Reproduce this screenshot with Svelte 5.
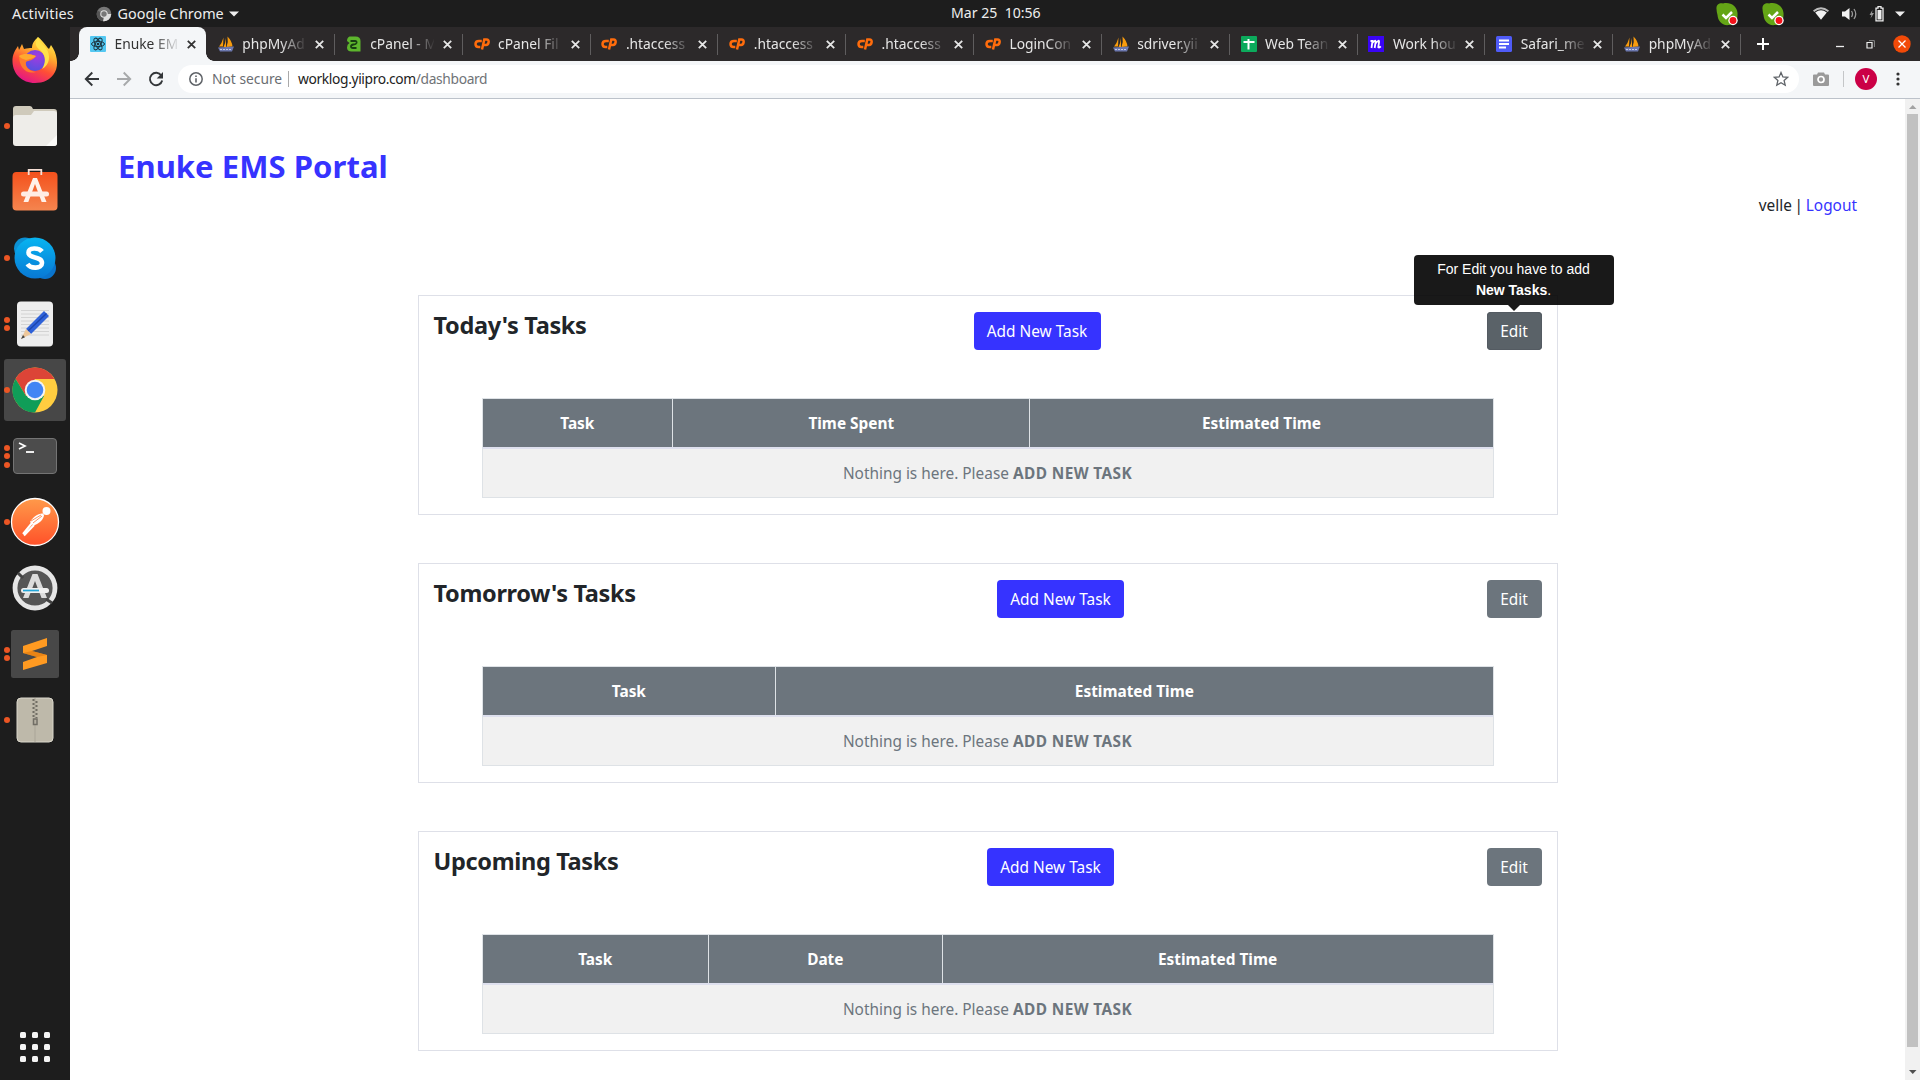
<script>
  const tabs = [
    ['react', 'Enuke EM'], ['pma', 'phpMyAd'], ['host', 'cPanel - M'],
    ['cp', 'cPanel Fil'], ['cp', '.htaccess'], ['cp', '.htaccess'],
    ['cp', '.htaccess'], ['cp', 'LoginCon'], ['pma', 'sdriver.yii'],
    ['sheet', 'Web Tean'], ['m', 'Work hou'], ['doc', 'Safari_me'], ['pma', 'phpMyAd']
  ];
  const dock = [
    ['firefox', 0], ['files', 1], ['software', 0], ['skype', 1], ['editor', 2], ['chrome', 1],
    ['terminal', 3], ['postman', 1], ['updater', 0], ['sublime', 2], ['zip', 1]
  ];
  const sections = [
    { title: "Today's Tasks", width: 154, tip: true, cols: [['Task', 190], ['Time Spent', 357], ['Estimated Time', 463]] },
    { title: "Tomorrow's Tasks", width: 201, tip: false, cols: [['Task', 293], ['Estimated Time', 717]] },
    { title: 'Upcoming Tasks', width: 181, tip: false, cols: [['Task', 226], ['Date', 233], ['Estimated Time', 551]] }
  ];
</script>

<div class="desktop">
  <header class="topbar">
    <span class="act">Activities</span>
    <svg class="appicon" width="16" height="16" viewBox="0 0 16 16"><circle cx="8" cy="8" r="7.3" fill="#777" /><path d="M8 8H15.2A7.3 7.3 0 0 1 7 15.2z" fill="#ddd" /><path d="M8 8L1.5 4.5A7.3 7.3 0 0 0 7 15.2z" fill="#555" /><circle cx="8" cy="8" r="3.8" fill="#ddd" /><circle cx="8" cy="8" r="2.7" fill="#777" /></svg>
    <span class="appname">Google Chrome</span>
    <svg class="caret" width="10" height="6" viewBox="0 0 10 6"><path d="M0 .5h10L5 5.5z" fill="#eee" /></svg>
    <span class="clock">Mar 25&nbsp; 10:56</span>
    <div class="tray">
      {#each [0, 1] as n (n)}
        <svg class="sk" width="24" height="24" viewBox="0 0 24 24"><path d="M1.5 7C1 3 4 .8 8 1.500C15-.5 22 4 22.500 11C23 18 20 23 14 23C7 24 3 19 2.500 13C2 11 1.500 9 1.500 7z" fill="#64a516" /><path d="M7.500 12.500l3.500 3.500 6-6" fill="none" stroke="#fff" stroke-width="2.500" /><circle cx="18" cy="18.500" r="4.700" fill="#fff" /><circle cx="18" cy="18.500" r="3.400" fill="#f4131b" /></svg>
      {/each}
      <svg class="wifi" width="16" height="13" viewBox="0 0 16 13"><path d="M0 3.500Q8-3 16 3.500L14.800 5Q8-.5 1.200 5z" fill="#bbb" /><path d="M2.200 5.600Q8 1 13.800 5.600L8 12.700z" fill="#f2f2f2" /></svg>
      <svg class="vol" width="16" height="14" viewBox="0 0 16 14"><path d="M0 4.500h3L7.500 1v12L3 9.500H0z" fill="#f2f2f2" /><path d="M9.500 4q2 3 0 6M12 2q3.500 5 0 10" fill="none" stroke="#999" stroke-width="1.300" /></svg>
      <svg class="bat" width="15" height="16" viewBox="0 0 15 16"><path d="M3.500 4L.5 9h2l-1 3.500L5 7H3z" fill="#999" /><path d="M7 2.200h2V.7h3v1.500h2v12.600H7z" fill="none" stroke="#eee" stroke-width="1.300" /><path d="M8.500 4h4v9.500h-4z" fill="#eee" /></svg>
      <svg class="caret2" width="10" height="6" viewBox="0 0 10 6"><path d="M0 .5h10L5 5.500z" fill="#eee" /></svg>
    </div>
  </header>

  <div class="below">
    <nav class="dock">
      {#each dock as [name, dots] (name)}
        <div class="app">
          <div class="dots">{#each Array(dots) as _, i (i)}<i></i>{/each}</div>
          <div class="tile" class:lit={name === 'chrome'}>
            <svg width="50" height="50" viewBox="0 0 50 50">
              {#if name === 'firefox'}
                <defs>
                  <linearGradient id="ff" x1=".8" y1="0" x2=".35" y2="1"><stop offset="0" stop-color="#fff44f" /><stop offset=".35" stop-color="#ffb02e" /><stop offset=".65" stop-color="#ff4f35" /><stop offset="1" stop-color="#e31587" /></linearGradient>
                  <radialGradient id="fp" cx=".6" cy=".3" r=".75"><stop offset="0" stop-color="#a33be0" /><stop offset="1" stop-color="#5351e0" /></radialGradient>
                </defs>
                <path d="M28 2C31 4 33 7 35.500 10C37 12 38 13 39 14L41 10C47 18 49 30 45 37C41 45 33 48 25 48C12 48 3 39 2.500 27C2 19 6 14 8 11L9 15L12 9L14 14C17 13 20 13 22 13C22 8 25 5 28 2z" fill="url(#ff)" />
                <circle cx="25" cy="25.500" r="10.500" fill="url(#fp)" /><path d="M9 21C14 18 20 19 26 21C23 26 19 25 16 27C15 32 19 36 26 37C15 40 9 31 9 21z" fill="#ff7b2d" /><path d="M9 21C14 18 20 19 26 21C23 24 19 24 16 25C13 24 10 23 9 21z" fill="#ffa92f" /><path d="M28 2C24 9 26 12 31 16C36 21 36 28 32 34C40 30 41 20 36 13C32 8 29 7 28 2z" fill="#ffe14a" />
              {:else if name === 'files'}
                <path d="M3 8q0-3 3-3h14q2 0 3 3h21q3 0 3 3v10H3z" fill="#cfcabb" /><path d="M3 17q0-3 3-3h15l3-4h20q3 0 3 3v29q0 3-3 3H6q-3 0-3-3z" fill="#eeede9" /><path d="M47 34v8q0 3-3 3h-8z" fill="#fafaf8" />
              {:else if name === 'software'}
                <defs><linearGradient id="so" x1="0" y1="0" x2="0" y2="1"><stop offset="0" stop-color="#f4511c" /><stop offset="1" stop-color="#f4854f" /></linearGradient></defs>
                <rect x="2.500" y="5" width="45" height="38.500" rx="4" fill="url(#so)" /><path d="M18.700 8V2.800h12.600V8" fill="none" stroke="#f6dfd5" stroke-width="1.800" /><path d="M23 11h4l9.500 24h-4.800L25 17l-6.700 18h-4.800z" fill="#fff1e9" /><rect x="11" y="24.500" width="28" height="5" rx="2.500" fill="#ffece4" />
              {:else if name === 'skype'}
                <defs><linearGradient id="sy" x1="0" y1="0" x2="0" y2="1"><stop offset="0" stop-color="#08b5f1" /><stop offset="1" stop-color="#0878d4" /></linearGradient></defs>
                <circle cx="15" cy="15.500" r="11" fill="#0c91d4" /><circle cx="35" cy="35" r="11" fill="#0a74cc" /><circle cx="25" cy="25" r="20.500" fill="url(#sy)" /><path d="M32 18.500C29 14.500 18.500 14 18.500 19.500C18.500 26 32 23 32 30C32 36 20.500 36 17.500 31" fill="none" stroke="#fff" stroke-width="4.600" />
              {:else if name === 'editor'}
                <rect x="7" y="2.500" width="36" height="45" rx="4" fill="#eee" /><path d="M11 11.500h28M11 15h28M11 18.500h28M11 22h28M11 25.500h28M11 29h28M11 32.500h28M11 36h28" stroke="#ccc" stroke-width=".8" /><path d="M16 30L34 12l5 5-18 18z" fill="#2f62d9" /><path d="M18 32L36.500 14.500" stroke="#1c46ad" stroke-width="1.500" /><path d="M16 30l5 5-10 5z" fill="#eec79a" /><path d="M13 36l2 2.200-4 1.800z" fill="#444" />
              {:else if name === 'chrome'}
                <circle cx="25" cy="25" r="22.500" fill="#ffcd40" /><path d="M5.500 13.750A22.500 22.500 0 0 1 44.500 14H25L16 31z" fill="#dc4437" /><path d="M5.500 13.750A22.500 22.500 0 0 0 25 47.500L34 31L16 31z" fill="#109d58" /><circle cx="25" cy="25" r="10.300" fill="#f4f4f4" /><circle cx="25" cy="25" r="8.300" fill="#4285f4" />
              {:else if name === 'terminal'}
                <rect x="3.500" y="7.500" width="43" height="35" rx="3.500" fill="#4c4c4c" stroke="#747474" /><path d="M9 12l6 3-6 3" fill="none" stroke="#fff" stroke-width="1.700" /><path d="M16 21h8" stroke="#fff" stroke-width="1.800" />
              {:else if name === 'postman'}
                <defs><linearGradient id="pm" x1="0" y1="0" x2="0" y2="1"><stop offset="0" stop-color="#ff9a4a" /><stop offset="1" stop-color="#ff5129" /></linearGradient></defs>
                <circle cx="25" cy="25" r="23.500" fill="url(#pm)" stroke="#fff" stroke-width="1.300" /><circle cx="36.500" cy="14" r="4" fill="#fff" /><path d="M33 16.500C28 16 23 20 20 25l3.500 3.500C29 27 34 22 34 18z" fill="#fff" /><path d="M22 26L13 37M24 28L14 38.500" stroke="#fff" stroke-width="2" /><path d="M21 24l10-6M23 26l9-7" stroke="#ff7a3b" stroke-width=".8" />
              {:else if name === 'updater'}
                <circle cx="25" cy="25" r="20" fill="#565656" stroke="#e6e6e6" stroke-width="4.800" /><path d="M8 10l5 5M36 36l6 4" stroke="#444" stroke-width="3" /><path d="M22.500 11h5l9.500 24h-5.500L25 18l-6.500 17H13z" fill="#dcdcdc" /><rect x="11" y="25" width="28" height="5" rx="2.500" fill="#f0f0f0" /><path d="M13 27.500h16" stroke="#25a6d8" stroke-width="1.700" />
              {:else if name === 'sublime'}
                <rect x="1" y="1" width="48" height="48" rx="2.500" fill="#484848" /><path d="M13 17L37 9v8l-15 5 15 4v8L13 41v-8l14-5-14-4z" fill="#ff9a21" /><path d="M13 24l9-2 15 4-10 2z" fill="#db760d" opacity=".6" />
              {:else}
                <rect x="7" y="3" width="36" height="44" rx="4" fill="#beb9aa" stroke="#dad7cb" /><path d="M25 3v44" stroke="#aaa598" /><path d="M23.500 4v19M26.500 6v17" stroke="#716e65" stroke-width="2" stroke-dasharray="2 2" /><rect x="23.500" y="24" width="3.500" height="5.500" fill="none" stroke="#716e65" stroke-width="1.500" />
              {/if}
            </svg>
          </div>
        </div>
      {/each}
      <div class="grid9">{#each Array(9) as _, i (i)}<i></i>{/each}</div>
    </nav>

    <section class="browser">
      <div class="strip">
        {#each tabs as [icon, label], i (i)}
          <div class="tab" class:active={i === 0}>
            <svg class="fav" width="16" height="16" viewBox="0 0 16 16">
              {#if icon === 'react'}
                <rect width="16" height="16" rx="1" fill="#53c8f2" /><g fill="none" stroke="#1d3440"><ellipse cx="8" cy="8" rx="6.500" ry="2.600" /><ellipse cx="8" cy="8" rx="6.500" ry="2.600" transform="rotate(60 8 8)" /><ellipse cx="8" cy="8" rx="6.500" ry="2.600" transform="rotate(120 8 8)" /></g><circle cx="8" cy="8" r="1.300" fill="#1d3440" />
              {:else if icon === 'pma'}
                <path d="M5.500 1.500L5 10.500H1Q4 7 5.500 1.500zM9.500.5Q14 5 14.500 10.500L8.500 11Q10.500 6 9.500.5zM8 2v9H5.500Q7.500 7 8 2z" fill="#f89c0e" /><path d="M0 11.500l16-1-2 5H2z" fill="#6c78af" /><path d="M2 13.500h12" stroke="#c3c9e6" stroke-dasharray="2 1" />
              {:else if icon === 'host'}
                <path d="M3.500 .5H9.500Q14.500 .5 14.500 5V15.500H5.500Q1 15.500 1 11.500Q1 8.300 3.500 7L1 5Q1 1.500 3.500 .5z" fill="#5db52d" /><path d="M4.500 5H9Q11 5 10.500 7Q10 8.500 7.500 8.500Q5 8.800 5 10.500Q5 12 7 12H10.500" fill="none" stroke="#173d12" stroke-width="1.800" />
              {:else if icon === 'cp'}
                <path d="M7.800 5H5Q1.500 5 1.500 8t3 3h1.800M8 13.500L10.300 3.500H12.500Q15 3.500 14.600 6.200T12 9H9.800" fill="none" stroke="#ff6c0c" stroke-width="2.500" />
              {:else if icon === 'sheet'}
                <rect width="16" height="16" rx="1" fill="#0caa5c" /><path d="M2.500 6h11M7.500 3v10.500" stroke="#fff" stroke-width="2" />
              {:else if icon === 'm'}
                <rect width="16" height="16" fill="#3a05f5" /><path d="M2.500 5l2 0-1 7M4 7.500Q8 2.500 7.500 6.500L6.700 12M7.500 7.500Q11.500 2.500 11 6.500l-.7 4.700q1 .8 2.500-.8" fill="none" stroke="#fff" stroke-width="1.800" />
              {:else}
                <rect width="16" height="16" rx="1.500" fill="#4f5bf7" /><path d="M3 4.500h10M3 8h10M3 11.500h7" stroke="#fff" stroke-width="1.800" />
              {/if}
            </svg>
            <span class="label">{label}</span>
            <svg class="x" width="9" height="9" viewBox="0 0 9 9"><path d="M.8.8l7.400 7.400M8.200.8L.8 8.200" stroke="currentColor" stroke-width="1.800" /></svg>
          </div>
        {/each}
        <svg class="plus" width="14" height="14" viewBox="0 0 14 14"><path d="M7 1v12M1 7h12" stroke="#fff" stroke-width="2" /></svg>
        <div class="winbtns">
          <svg width="8" height="10" viewBox="0 0 8 10"><path d="M0 7.500h8" stroke="#eee" stroke-width="1.300" /></svg>
          <svg class="restore" width="9" height="9" viewBox="0 0 9 9"><path d="M1 2.500h5v5.500H1z" fill="none" stroke="#eee" stroke-width="1.200" /><path d="M3 .6h5.400V7" fill="none" stroke="#888" /></svg>
          <svg width="18" height="18" viewBox="0 0 18 18"><circle cx="9" cy="9" r="8.700" fill="#f24a08" /><path d="M5.500 5.500l7 7M12.500 5.500l-7 7" stroke="#fff" stroke-width="1.300" /></svg>
        </div>
      </div>

      <div class="toolbar">
        <div class="nav">
          <svg width="16" height="16" viewBox="0 0 16 16"><path d="M15 8H2M8.300 1.500L1.800 8l6.500 6.500" fill="none" stroke="#333639" stroke-width="1.900" /></svg>
          <svg width="16" height="16" viewBox="0 0 16 16"><path d="M1 8h13M7.700 1.500L14.200 8l-6.500 6.500" fill="none" stroke="#a7a9ab" stroke-width="1.900" /></svg>
          <svg width="16" height="16" viewBox="0 0 16 16"><path d="M13.300 4.500A6.200 6.200 0 1 0 14.200 9.500" fill="none" stroke="#333639" stroke-width="1.900" /><path d="M15 1v6.500H8.700z" fill="#333639" /></svg>
        </div>
        <div class="omni">
          <svg width="14" height="14" viewBox="0 0 14 14"><circle cx="7" cy="7" r="6.200" fill="none" stroke="#5f6368" stroke-width="1.500" /><path d="M7 6.200v4.300M7 3.400v1.600" stroke="#5f6368" stroke-width="1.600" /></svg>
          <span class="sec">Not secure</span><i class="bar"></i><span class="url">worklog.yiipro.com<em>/dashboard</em></span>
          <svg class="star" width="16" height="16" viewBox="0 0 16 16"><path d="M8 1.500l1.900 4.400 4.800.4-3.600 3.200 1.100 4.700L8 11.700l-4.200 2.500 1.100-4.700L1.300 6.300l4.800-.4z" fill="none" stroke="#5f6368" stroke-width="1.300" /></svg>
        </div>
        <svg class="cam" width="16" height="14" viewBox="0 0 16 14"><path d="M1 2.500h3L5 .5h6l1 2h3q1 0 1 1V13q0 1-1 1H1q-1 0-1-1V3.500q0-1 1-1z" fill="#9a9a9a" /><circle cx="8" cy="7.500" r="3" fill="none" stroke="#fff" stroke-width="1.700" /></svg>
        <i class="bar2"></i>
        <span class="avatar">V</span>
        <svg class="kebab" width="4" height="14" viewBox="0 0 4 14"><circle cx="2" cy="2" r="1.600" fill="#333" /><circle cx="2" cy="7" r="1.600" fill="#333" /><circle cx="2" cy="12" r="1.600" fill="#333" /></svg>
      </div>

      <div class="view">
        <main>
          <h1>Enuke EMS Portal</h1>
          <p class="user">velle | <a href="#logout">Logout</a></p>
          {#each sections as s (s.title)}
            <article class="card">
              <div class="head">
                <h2 style:width="{s.width}px">{s.title}</h2>
                <button class="add">Add New Task</button>
                <div class="editwrap">
                  <button class="edit" class:hover={s.tip}>Edit</button>
                  {#if s.tip}<div class="tip">For Edit you have to add <b>New Tasks</b>.</div>{/if}
                </div>
              </div>
              <div class="table">
                <div class="row">
                  {#each s.cols as [name, w] (name)}<div class="th" style:flex-grow={w}>{name}</div>{/each}
                </div>
                <div class="empty">Nothing is here. Please <b>ADD NEW TASK</b></div>
              </div>
            </article>
          {/each}
        </main>
        <div class="scroll">
          <svg width="15" height="15" viewBox="0 0 15 15"><path d="M4 10h7.500L7.750 6z" fill="#a3a3a3" /></svg>
          <div class="thumb"></div>
          <svg class="dn" width="15" height="15" viewBox="0 0 15 15"><path d="M4 5h7.500L7.750 9z" fill="#505050" /></svg>
        </div>
      </div>
    </section>
  </div>
</div>

<style>
  :global(body) { margin: 0; overflow: hidden; }
  * { box-sizing: border-box; }
  svg { display: block; flex: none; }
  .desktop { width: 1920px; height: 1080px; display: flex; flex-direction: column; font-family: "Noto Sans", sans-serif; background: #1d1d1d; overflow: hidden; }
  .topbar { height: 27px; flex: none; display: grid; grid-template-columns: 96px 21.500px 107.500px 1fr 0 auto; align-items: center; color: #eee; font-size: 14.400px; line-height: 26px; white-space: nowrap; position: relative; }
  .act { padding-left: 12px; letter-spacing: .2px; }
  .caret { margin-left: 4px; }
  .clock { position: absolute; left: 951px; top: 0; font-size: 14.100px; line-height: 25px; }
  .tray { grid-column: 6; display: flex; align-items: center; padding-right: 15px; height: 26px; }
  .sk { margin-right: 22px; }
  .wifi { margin-left: 6px; margin-right: 13px; }
  .vol { margin-right: 11px; }
  .bat { margin-right: 11px; }
  .below { display: flex; flex: 1; min-height: 0; }
  .dock { width: 70px; display: flex; flex-direction: column; background: #1d1d1d; flex: none; }
  .app { height: 66px; display: flex; align-items: center; flex: none; }
  .dots { width: 4px; display: flex; flex-direction: column; gap: 2.500px; flex: none; }
  .dots i { width: 6px; height: 6px; border-radius: 3px; background: #ec5624; z-index: 1; margin-left: 4px; flex: none; }
  .tile { width: 62px; height: 62px; display: flex; align-items: center; justify-content: center; border-radius: 3px; }
  .lit { background: #474747; }
  .grid9 { margin: auto auto 18px 20px; display: grid; grid-template-columns: repeat(3, 6px); gap: 6px; }
  .grid9 i { height: 6px; width: 6px; border-radius: 1.500px; background: #f5f5f5; }
  .browser { flex: 1; display: flex; flex-direction: column; min-width: 0; background: #fff; }
  .strip { height: 34px; flex: none; background: #2c292a; display: flex; align-items: center; padding-left: 8.500px; color: #e6e6e6; }
  .tab { width: 127.850px; height: 34px; display: flex; align-items: center; flex: none; padding-left: 11.500px; position: relative; }
  .tab:not(.active)::after { content: ""; flex: none; width: 1px; height: 21px; background: #5f5d5e; margin-left: 10px; }
  .active { background: #f4f6f8; color: #333; border-radius: 8px 8px 0 0; }
  .active::before, .active::after { content: ""; position: absolute; bottom: 0; width: 8px; height: 8px; z-index: 1; }
  .active::before { left: -8px; background: radial-gradient(circle at 0 0, transparent 7.500px, #f4f6f8 8px); }
  .active::after { right: -8px; background: radial-gradient(circle at 100% 0, transparent 7.500px, #f4f6f8 8px); }
  .label { width: 64px; margin: 0 8.500px 0 8.500px; white-space: nowrap; font-size: 13.800px; line-height: 20px; mask-image: linear-gradient(90deg, #000 60%, transparent 102%); flex: none; }
  .plus { margin-left: 16px; }
  .winbtns { margin-left: auto; display: flex; align-items: center; gap: 22px; padding-right: 9px; }
  .restore { margin-right: -4px; }
  .toolbar { height: 38px; flex: none; background: #f4f6f8; display: flex; align-items: center; border-bottom: 1px solid #bcc2ca; padding: 0 20px 2px 14px; }
  .nav { display: flex; gap: 16px; }
  .omni { width: 1621px; height: 28px; margin-left: 14px; background: #fff; border-radius: 14px; display: flex; align-items: center; padding: 0 10px 0 11px; font-size: 13.800px; margin-top: 1px; flex: none; }
  .sec { color: #6a6d71; margin-left: 9px; width: 69px; white-space: nowrap; padding-bottom: 2px; }
  .bar { width: 1px; height: 16px; background: #aaa; margin: 0 9px 0 7px; }
  .url { color: #222; letter-spacing: -.36px; padding-bottom: 2px; }
  .url em { color: #707377; font-style: normal; }
  .star { margin-left: auto; }
  .cam { margin-left: 14px; }
  .bar2 { width: 1px; height: 16px; background: #c4c6c8; margin: 0 11px 0 14px; }
  .avatar { width: 22px; height: 22px; border-radius: 50%; background: #cb0046; color: #fff; font-size: 11.500px; line-height: 22px; text-align: center; }
  .kebab { margin-left: 19px; }
  .view { flex: 1; display: flex; min-height: 0; }
  main { flex: 1; padding: 48px 48px 0; min-width: 0; overflow: hidden; color: #212529; font-size: 15.400px; line-height: 24px; }
  h1 { margin: 0; font-size: 31px; line-height: 38px; font-weight: 700; color: #3633ff; letter-spacing: .06px; }
  .user { margin: 9px 0 0; text-align: right; word-spacing: -1.300px; }
  a { color: #3633ff; text-decoration: none; }
  .card { width: 1140px; height: 220px; margin: 0 auto 48px; border: 1px solid #dee0e8; padding: 16px 15px; }
  .user + .card { margin-top: 77px; }
  .head { display: flex; justify-content: space-between; height: 38px; }
  h2 { margin: 0; font-size: 23.500px; line-height: 26px; white-space: nowrap; letter-spacing: -.32px; }
  button { font: inherit; height: 38px; border: 0; border-radius: 4px; color: #fff; padding: 2px 0 0; white-space: nowrap; }
  .add { width: 127px; background: #3633ff; }
  .edit { width: 55px; background: #6c757d; }
  .hover { background: #5a6268; box-shadow: inset 0 0 0 1px #545b62; }
  .editwrap { position: relative; }
  .tip { position: absolute; left: -73px; top: -57px; width: 200px; height: 50px; border-radius: 4px; background: rgba(0, 0, 0, .9); color: #fff; font: 14px/21px "Liberation Sans", sans-serif; text-align: center; padding: 4px 20px; z-index: 2; }
  .tip::after { content: ""; position: absolute; left: 94px; top: 50px; border: 6.400px solid transparent; border-top-color: rgba(0, 0, 0, .9); border-bottom: 0; }
  .table { margin: 48px 48px 0; border: 1px solid #dee2e6; }
  .row { display: flex; height: 50px; border-bottom: 2px solid #dee0ee; background: #6c757d; color: #fff; font-weight: 700; }
  .th { flex-basis: 0; text-align: center; line-height: 50px; min-width: 0; }
  .th + .th { border-left: 1px solid #dee2e6; }
  .empty { height: 48px; background: #f1f1f1; color: #6c757d; text-align: center; line-height: 50px; }
  .empty b { letter-spacing: .4px; }
  .scroll { width: 15px; background: #f1f1f1; display: flex; flex-direction: column; flex: none; }
  .thumb { width: 11px; height: 933px; margin-left: 2px; background: #c1c1c1; }
  .dn { margin-top: auto; }
</style>
